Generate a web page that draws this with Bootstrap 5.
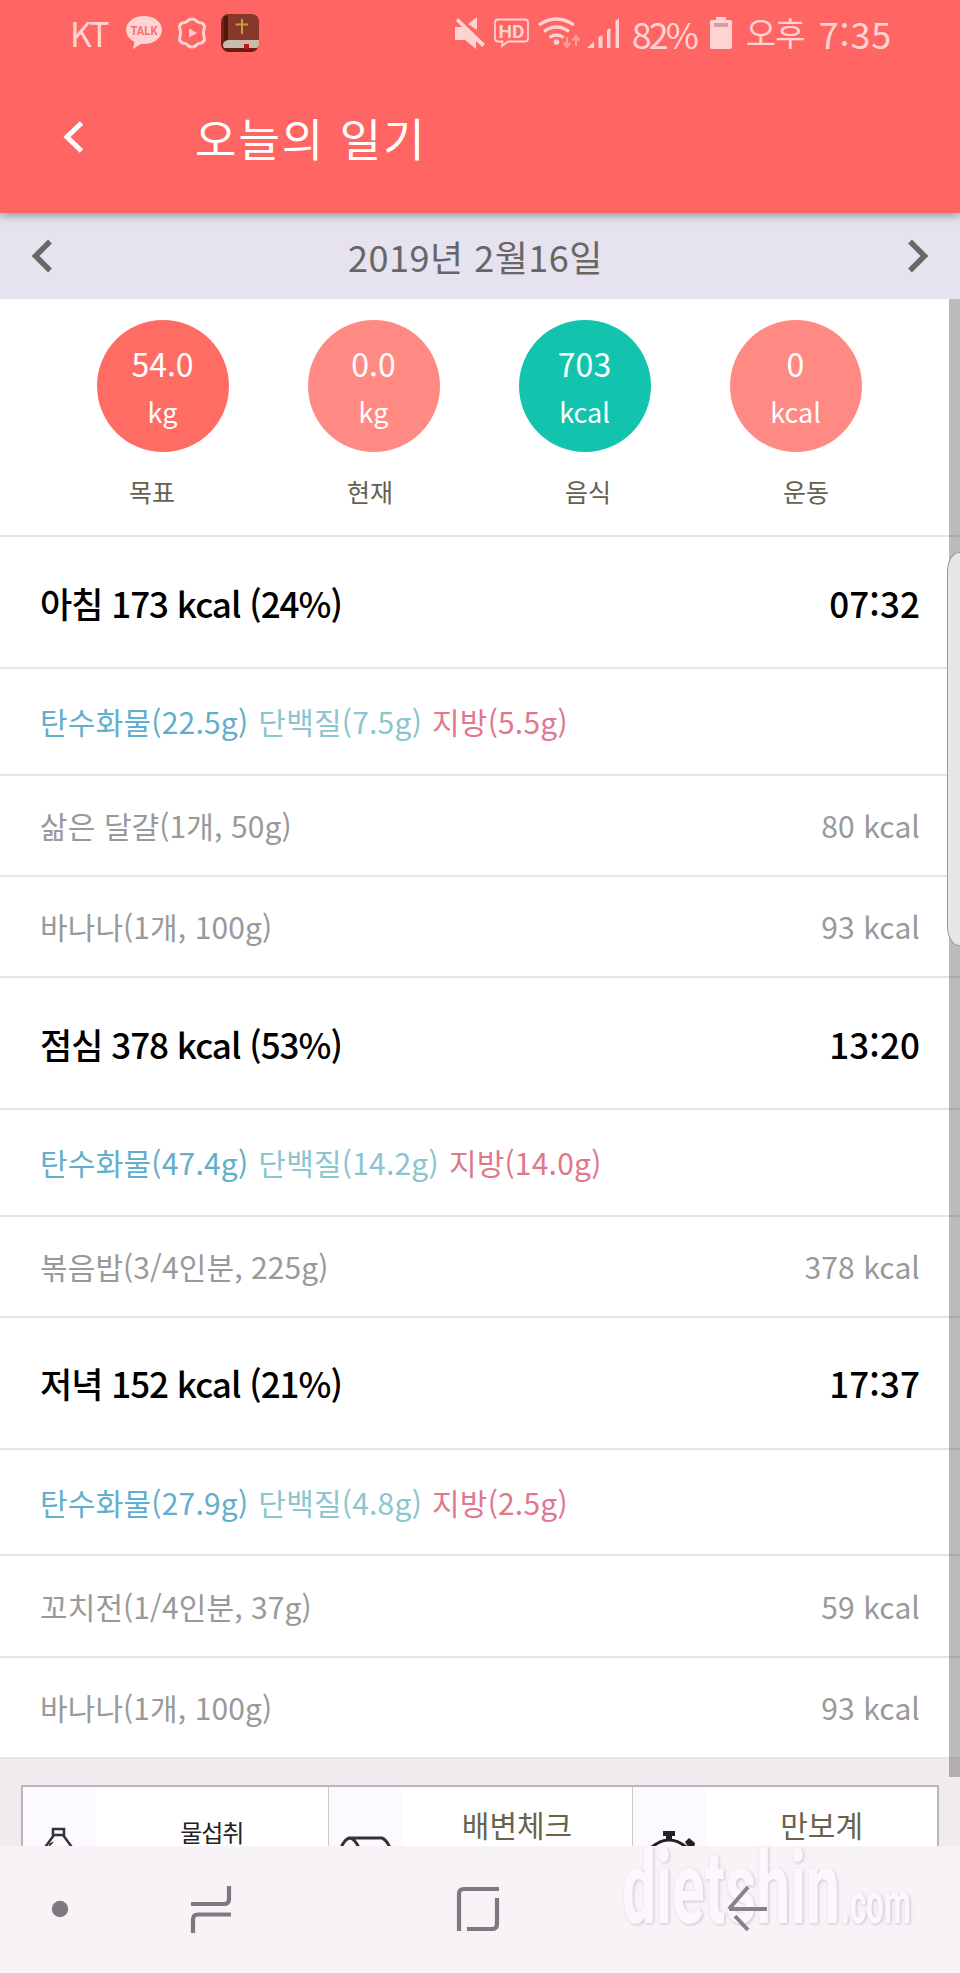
<!DOCTYPE html>
<html lang="ko">
<head>
<meta charset="utf-8">
<meta name="viewport" content="width=device-width, initial-scale=1">
<title>오늘의 일기</title>
<link href="https://cdn.jsdelivr.net/npm/bootstrap@5.3.0/dist/css/bootstrap.min.css" rel="stylesheet">
<style>
body{font-family:"Noto Sans CJK KR","Noto Sans",sans-serif;line-height:1;width:960px;height:1973px;overflow:hidden;background:#efebee;color:#000}
svg{display:block;flex:none}
.app-head{height:213px;background:#ff6562;color:#fff;position:relative;z-index:2;box-shadow:0 2px 9px rgba(70,85,95,.6)}
.status{height:65px;padding:0 68px 0 70px;color:#ffd3d3;font-size:36px;white-space:nowrap}
.carrier{width:56px;letter-spacing:-2px;font-size:34px}
.pct{width:78px;letter-spacing:-3px}
.ampm{width:73px;font-size:33px;letter-spacing:-1px}
.title-row{height:144px;padding:0 0 0 63px}
.title-row h1{font-size:45px;letter-spacing:2px;margin:0 0 0 110px;font-weight:400;line-height:1}
.date-row{height:86px;background:#e6e2ef;color:#666765;font-size:36px;letter-spacing:.5px;padding:0 31px}
.goals{height:238px;background:#fff;border-bottom:2px solid #e4e4e4;padding-top:21px}
.circles{padding:0 59px 0 57px}
.ring{width:132px;height:132px;border-radius:50%;color:#fff;padding-top:27px;font-size:32px}
.ring small{font-size:27px;margin-top:19px;line-height:1}
.c-goal{background:#ff6c63}.c-soft{background:#ff8983}.c-food{background:#12c4ad}
.names{padding:0 45px 0 43px;margin-top:27px;font-size:25px;color:#666050}
.meal,.macro,.food{background:#fff;border-bottom:2px solid #e5e5e5;padding:0 40px;white-space:nowrap}
.meal{height:132px;font-size:35px;font-weight:500;letter-spacing:-1px}
.clock{letter-spacing:.1px}
.macro{height:106.5px;font-size:30px;gap:10px;letter-spacing:.22px}
.food{height:101.25px;font-size:30px;color:#999;letter-spacing:.1px}
.carb{color:#62aecd}.prot{color:#8bc5cf}.fat{color:#e0788c}
.tools{margin:26px 21px 0 21px;height:61px;border:2px solid #bab6bb;border-bottom:0;background:#fff;overflow:hidden;color:#69634c}
.tool+.tool{border-left:1px solid #ccc8d0}
.tool{height:61px}
.tool svg{background:#fdfaff}
.tool span{padding-top:22px;font-size:30px}
.tool .water{font-size:24px;color:#222;padding-top:33px;letter-spacing:-1px}
.softkeys{height:128px;background:#f7f3f7;position:relative}
.keys{height:126px;position:relative}
.brand{position:absolute;left:610px;top:-20px;filter:drop-shadow(1px 1px 1.5px rgba(90,80,95,.28))}
.edge-bar{position:absolute;right:0;top:299px;width:11px;height:1478px;background:rgba(80,75,80,.38)}
.edge-tab{position:absolute;left:947px;top:552px;width:26px;height:394px;border:1px solid #999;border-radius:12px/20px;background:rgba(232,232,232,.97)}
</style>
</head>
<body class="position-relative">
<header class="app-head">
  <div class="status d-flex align-items-center">
    <span class="carrier">KT</span>
    <svg width="36" height="34" viewBox="0 0 36 34"><path fill="#ffd3d3" d="M18 0C8 0 0 6.200 0 14c0 5 3.400 9.300 8.400 11.800L7 33l8.400-5.200c.9.100 1.700.2 2.600.2 10 0 18-6.200 18-14S28 0 18 0z"/><text x="18" y="18.500" text-anchor="middle" textLength="27" lengthAdjust="spacingAndGlyphs" font-family="Roboto" font-weight="700" font-size="12" fill="#f86f6f">TALK</text></svg>
    <svg class="ms-3" width="28" height="34" viewBox="0 0 28 34"><path fill="none" stroke="#ffd3d3" stroke-width="3" stroke-linejoin="round" d="M14 3q3 0 5 2.500 2 1.500 4.500 1.500 3 1 3 4.500-1 2.500-1 5.500t1 5.500q0 3.500-3 4.500-2.500 0-4.500 1.500-2 2.500-5 2.500t-5-2.500q-2-1.500-4.500-1.500-3-1-3-4.500 1-2.500 1-5.500t-1-5.500q0-3.500 3-4.500 2.500 0 4.500-1.500Q11 3 14 3z"/><path fill="#ffc3df" d="M11 12.500v9l8-4.500z"/></svg>
    <svg style="margin-left:15px" width="38" height="38" viewBox="0 0 38 38"><rect width="38" height="38" rx="8" fill="#6f2419"/><path d="M6 0h24a8 8 0 0 1 8 8v18H6z" fill="#86382a"/><path d="M3 2h4v24l-4 3z" fill="#52170f"/><path d="M7 26h31v5q-1 4-6 4H7q-5 0-5-4t5-5z" fill="#c9bcae"/><path d="M3 34h33q-2 4-6 4H8q-4 0-5-4z" fill="#641f16"/><path d="M23 30h5v5h-5z" fill="#c31219"/><path d="M21 5v15M14.500 10.500h12.500" stroke="#c89b3a" stroke-width="2"/></svg>
    <svg class="ms-auto" width="30" height="32" viewBox="0 0 30 32"><path fill="#ffd3d3" d="M0 10h7l14 14v8l-11-9H0zM13 7l9-7v13zM3 1l27 26-3 3L1 4z"/></svg>
    <svg style="margin-left:9px" width="35" height="30" viewBox="0 0 35 30"><path d="M4 1.500h27q3 0 3 3v16q0 3-3 3H14L8 28l.500-4.500H4q-3 0-3-3v-16q0-3 3-3z" fill="none" stroke="#ffd3d3" stroke-width="1.800"/><text x="17.500" y="19.500" text-anchor="middle" textLength="26" lengthAdjust="spacingAndGlyphs" font-family="Roboto" font-weight="700" font-size="19" fill="#ffd3d3">HD</text></svg>
    <svg style="margin-left:9px" width="43" height="32" viewBox="0 0 43 32"><path d="M1 8q17-12 35 0M6 14.500q12.500-9 25 0M11.500 20.500q7-5 14 0" fill="none" stroke="#ffd3d3" stroke-width="3.200"/><circle cx="18.500" cy="25" r="2.800" fill="#ffd3d3"/><path d="M29 20v9m-3.500-3.500L29 30l3.500-4.500M38 29v-9m-3.500 3.500L38 19l3.500 4.500" fill="none" stroke="#ff9c9a" stroke-width="2.200"/></svg>
    <svg style="margin-left:6px" width="33" height="32" viewBox="0 0 33 32"><path fill="#ffd3d3" d="M0 31l7-6.500V31zM11.500 20l4-2v13h-4zM20 13l3.500-2v20H20zM28.500 4L32 1v30h-3.500z"/></svg>
    <span class="pct" style="margin-left:12px">82%</span>
    <svg width="22" height="32" viewBox="0 0 22 32"><path fill="#ffd3d3" d="M6 0h10v3h4q2 0 2 2v25q0 2-2 2H2q-2 0-2-2V5q0-2 2-2h4z"/><path fill="#d89e9e" d="M4 6h14v4H4z"/></svg>
    <span class="ampm" style="margin-left:14px">오후</span><span style="letter-spacing:.8px">7:35</span>
  </div>
  <div class="title-row d-flex align-items-center">
    <svg width="22" height="34" viewBox="0 0 22 34"><path d="M18.500 3L4 17l14.500 14" fill="none" stroke="#fff" stroke-width="5"/></svg>
    <h1>오늘의 일기</h1>
  </div>
</header>

<div class="date-row d-flex align-items-center justify-content-between">
  <svg width="22" height="34" viewBox="0 0 22 34"><path d="M19 2.500L4.500 17 19 31.500" fill="none" stroke="#686967" stroke-width="5.500"/></svg>
  <span style="margin-right:9px">2019년 2월16일</span>
  <svg width="22" height="34" viewBox="0 0 22 34"><path d="M3 2.500L17.500 17 3 31.500" fill="none" stroke="#686967" stroke-width="5.500"/></svg>
</div>

<section class="goals">
  <div class="circles row g-0 text-center">
    <div class="col-3"><div class="ring c-goal mx-auto">54.0<small class="d-block">kg</small></div></div>
    <div class="col-3"><div class="ring c-soft mx-auto">0.0<small class="d-block">kg</small></div></div>
    <div class="col-3"><div class="ring c-food mx-auto">703<small class="d-block">kcal</small></div></div>
    <div class="col-3"><div class="ring c-soft mx-auto">0<small class="d-block">kcal</small></div></div>
  </div>
  <div class="names row g-0 text-center"><div class="col-3">목표</div><div class="col-3">현재</div><div class="col-3">음식</div><div class="col-3">운동</div></div>
</section>

<main>
  <div class="meal d-flex align-items-center justify-content-between"><span>아침 173 kcal (24%)</span><span class="clock">07:32</span></div>
  <div class="macro d-flex align-items-center"><span class="carb">탄수화물(22.5g)</span><span class="prot">단백질(7.5g)</span><span class="fat">지방(5.5g)</span></div>
  <div class="food d-flex align-items-center justify-content-between"><span>삶은 달걀(1개, 50g)</span><span>80 kcal</span></div>
  <div class="food d-flex align-items-center justify-content-between"><span>바나나(1개, 100g)</span><span>93 kcal</span></div>

  <div class="meal d-flex align-items-center justify-content-between"><span>점심 378 kcal (53%)</span><span class="clock">13:20</span></div>
  <div class="macro d-flex align-items-center"><span class="carb">탄수화물(47.4g)</span><span class="prot">단백질(14.2g)</span><span class="fat">지방(14.0g)</span></div>
  <div class="food d-flex align-items-center justify-content-between"><span>볶음밥(3/4인분, 225g)</span><span>378 kcal</span></div>

  <div class="meal d-flex align-items-center justify-content-between"><span>저녁 152 kcal (21%)</span><span class="clock">17:37</span></div>
  <div class="macro d-flex align-items-center"><span class="carb">탄수화물(27.9g)</span><span class="prot">단백질(4.8g)</span><span class="fat">지방(2.5g)</span></div>
  <div class="food d-flex align-items-center justify-content-between"><span>꼬치전(1/4인분, 37g)</span><span>59 kcal</span></div>
  <div class="food d-flex align-items-center justify-content-between"><span>바나나(1개, 100g)</span><span>93 kcal</span></div>
</main>

<div class="tools row g-0">
  <div class="tool col-4 d-flex">
    <svg width="73" height="61" viewBox="0 0 73 61"><path d="M30 42h11v6H30zM31 48L20 63M40 48l11 15" fill="none" stroke="#333" stroke-width="2.500"/><path d="M30 55l-4 4m1-3v2" stroke="#333" stroke-width="1.500"/></svg>
    <span class="water flex-fill text-center">물섭취</span>
  </div>
  <div class="tool col-4 d-flex">
    <svg width="73" height="61" viewBox="0 0 73 61"><path d="M11 63q8-20 17-6l3 6M19 51h34q5 2 9 12" fill="none" stroke="#333" stroke-width="3"/></svg>
    <span class="flex-fill text-center">배변체크</span>
  </div>
  <div class="tool col-4 d-flex">
    <svg width="73" height="61" viewBox="0 0 73 61"><path d="M19 60q17-14 34 0" fill="none" stroke="#222" stroke-width="3"/><path d="M30 44h12v5h-3v4h-6v-4h-3zM52 55l4-4 6 5-1 5h-5z" fill="#222"/></svg>
    <span class="flex-fill text-center">만보계</span>
  </div>
</div>

<footer class="softkeys">
  <svg class="brand" width="320" height="110" viewBox="0 0 320 110"><g fill="#fcf7fc" font-family="Roboto" font-weight="700"><text x="12" y="97" font-size="102" textLength="218" lengthAdjust="spacingAndGlyphs">dietshin</text><text x="231" y="97" font-size="58" textLength="70" lengthAdjust="spacingAndGlyphs">.com</text></g></svg>
  <div class="keys d-flex align-items-center">
    <svg width="18" height="18" style="margin-left:51px"><circle cx="9" cy="9" r="8.200" fill="#7d797e"/></svg>
    <svg width="42" height="48" viewBox="0 0 42 48" style="margin-left:121px"><path d="M1 19h33q5 0 5-5V1M41 29.500H8q-5 0-5 5V48" fill="none" stroke="#7d797e" stroke-width="4.200"/></svg>
    <svg width="44" height="46" viewBox="0 0 44 46" style="margin-left:224px"><path d="M3 45V8q0-5 5-5h35M41 12v26q0 5-5 5H11" fill="none" stroke="#7d797e" stroke-width="4.200"/></svg>
    <svg width="42" height="48" viewBox="0 0 42 48" style="margin-left:226px"><path d="M22 2L3 24M9 31l13 14M3 24h38" fill="none" stroke="#858387" stroke-width="4"/></svg>
  </div>
</footer>
<div class="edge-bar"></div>
<div class="edge-tab"></div>
<script src="https://cdn.jsdelivr.net/npm/bootstrap@5.3.0/dist/js/bootstrap.bundle.min.js"></script>
</body>
</html>
